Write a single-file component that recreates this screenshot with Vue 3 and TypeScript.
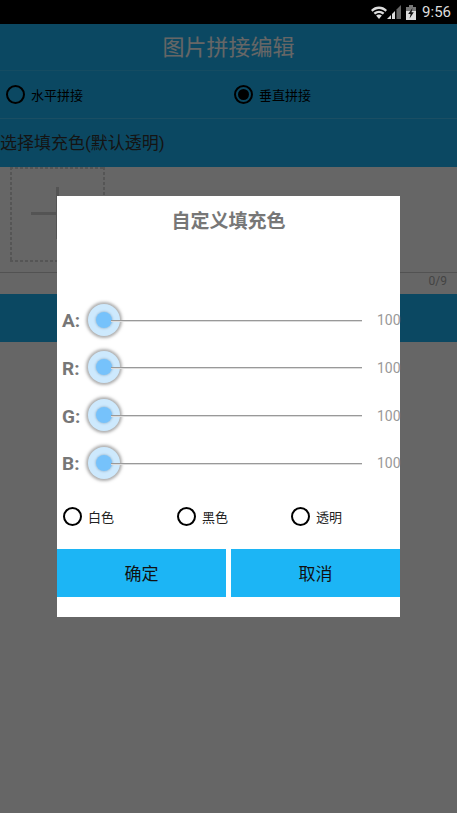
<script setup lang="ts">
const sliders = ['A', 'R', 'G', 'B'];
const fills = ['白色', '黑色', '透明'];
</script>

<template>
  <div class="screen">
    <div class="status">
      <svg class="wifi" viewBox="0 0 16 13" width="16" height="13">
        <path d="M0 4 C4.5 -0.6 11.5 -0.6 16 4 L14.5 5.8 C10.3 2.2 5.7 2.2 1.5 5.8Z" fill="#ddd" />
        <path d="M2.6 6.8 C5.8 3.9 10.2 3.9 13.4 6.8 L11.9 8.5 C9.5 6.4 6.5 6.4 4.1 8.5Z" fill="#ddd" />
        <path d="M5.1 9.5 C6.9 8 9.1 8 10.9 9.5 L8 13Z" fill="#ddd" />
      </svg>
      <svg class="signal" viewBox="0 0 14 14" width="14" height="14">
        <path d="M0 14 L4 10 V14Z" fill="#ddd" />
        <path d="M5 9 L8 6 V14 H5Z" fill="#ddd" />
        <path d="M9.5 4.5 L14 0 V14 H9.5Z" fill="#666" />
      </svg>
      <svg class="battery" viewBox="0 0 10 15" width="10" height="15">
        <path d="M3 0 H7 V2 H10 V15 H0 V2 H3Z" fill="#777" />
        <path d="M0 6 H10 V15 H0Z" fill="#ddd" />
        <path d="M6.5 3 L2.2 9 H4.6 L3.6 13.5 L7.8 7.2 H5.5Z" fill="#111" />
      </svg>
      <span class="time">9:56</span>
    </div>

    <div class="page">
      <header class="title">图片拼接编辑</header>
      <div class="mode-row">
        <label class="mode"><span class="radio"></span>水平拼接</label>
        <label class="mode"><span class="radio on"></span>垂直拼接</label>
      </div>
      <div class="fill-row">选择填充色(默认透明)</div>
      <div class="add-box"><span class="plus"></span></div>
      <div class="count">0/9</div>
      <div class="wide-btn"></div>

      <div class="scrim">
        <section class="dialog">
          <h2 class="dialog-title">自定义填充色</h2>
          <div class="sliders">
            <div v-for="s in sliders" :key="s" class="slider">
              <span class="letter">{{ s }}:</span>
              <div class="track">
                <span class="thumb"><span class="dot"></span></span>
              </div>
              <span class="value">100</span>
            </div>
          </div>
          <div class="fills">
            <label v-for="f in fills" :key="f" class="fill"><span class="radio small"></span>{{ f }}</label>
          </div>
          <div class="actions">
            <button class="action">确定</button>
            <button class="action">取消</button>
          </div>
        </section>
      </div>
    </div>
  </div>
</template>

<style scoped>
.screen {
  width: 457px;
  height: 813px;
  display: flex;
  flex-direction: column;
  overflow: hidden;
  font-family: "Roboto", "Noto Sans CJK SC", sans-serif;
  background: #000;
}
.status {
  height: 24px;
  flex: none;
  display: flex;
  align-items: center;
  justify-content: flex-end;
  padding-right: 6px;
  box-sizing: border-box;
}
.signal { margin-right: 5px; }
.battery { margin-right: 6px; }
.time {
  color: #ddd;
  font-size: 15px;
  line-height: 26px;
}
.page {
  position: relative;
  flex: 1;
  background: #fff;
  display: flex;
  flex-direction: column;
}
.title {
  height: 47px;
  box-sizing: border-box;
  background: #1cb5f5;
  border-bottom: 1px solid #35bdf6;
  color: #fff;
  font-size: 22px;
  line-height: 47px;
  text-align: center;
}
.mode-row {
  height: 48px;
  box-sizing: border-box;
  background: #1cb5f5;
  border-bottom: 1px solid #45c3f7;
  display: grid;
  grid-template-columns: 228px 1fr;
  padding-left: 6px;
}
.mode {
  display: flex;
  align-items: center;
  gap: 6px;
  font-size: 13px;
  color: #000;
}
.radio {
  width: 19px;
  height: 19px;
  box-sizing: border-box;
  border: 2px solid #000;
  border-radius: 50%;
  display: flex;
  align-items: center;
  justify-content: center;
  flex: none;
}
.radio.on::after {
  content: "";
  width: 11px;
  height: 11px;
  border-radius: 50%;
  background: #000;
}
.fill-row {
  height: 48px;
  background: #1cb5f5;
  color: #333;
  font-size: 17px;
  line-height: 49px;
  white-space: nowrap;
}
.add-box {
  width: 95px;
  height: 95px;
  margin-left: 10px;
  box-sizing: border-box;
  display: flex;
  align-items: center;
  justify-content: center;
  background:
    repeating-linear-gradient(90deg, #d4d4d4 0 3px, transparent 3px 5px) top / 100% 2px no-repeat,
    repeating-linear-gradient(90deg, #d4d4d4 0 3px, transparent 3px 5px) bottom / 100% 2px no-repeat,
    repeating-linear-gradient(180deg, #d4d4d4 0 3px, transparent 3px 5px) left / 2px 100% no-repeat,
    repeating-linear-gradient(180deg, #d4d4d4 0 3px, transparent 3px 5px) right / 2px 100% no-repeat;
}
.plus {
  width: 52px;
  height: 52px;
  margin: -3px 1px 0 0;
  background:
    linear-gradient(#d2d2d2, #d2d2d2) center / 52px 3px no-repeat,
    linear-gradient(#d2d2d2, #d2d2d2) center / 3px 52px no-repeat;
}
.count {
  margin-top: 10px;
  height: 22px;
  box-sizing: border-box;
  border-top: 1px solid #ccc;
  color: #aaa;
  font-size: 12px;
  line-height: 17px;
  text-align: right;
  padding-right: 10px;
}
.wide-btn {
  height: 48px;
  background: #1cb5f5;
}
.scrim {
  position: absolute;
  inset: 0;
  background: rgba(0, 0, 0, 0.6);
}
.dialog {
  position: absolute;
  left: 57px;
  top: 172px;
  width: 343px;
  height: 421px;
  background: #fff;
  display: flex;
  flex-direction: column;
}
.dialog-title {
  margin: 0;
  height: 100.5px;
  flex: none;
  color: #777;
  font-size: 19px;
  font-weight: 700;
  line-height: 51px;
  text-align: center;
}
.sliders {
  display: flex;
  flex-direction: column;
}
.slider {
  height: 47.67px;
  display: flex;
  align-items: center;
  padding-left: 5px;
}
.letter {
  width: 24px;
  flex: none;
  color: #777;
  font-size: 19px;
  font-weight: 700;
  line-height: 24px;
  padding-top: 2px;
}
.track {
  position: relative;
  width: 276px;
  height: 1px;
  flex: none;
}
.track::after {
  content: "";
  position: absolute;
  left: 25px;
  right: 0;
  top: 0;
  height: 1px;
  background: #999;
  box-shadow: 0 1px 0 #dcdcdc;
}
.thumb {
  position: absolute;
  left: 2px;
  top: -16px;
  width: 32px;
  height: 32px;
  border-radius: 50%;
  background: #cde9fd;
  box-shadow: 0 0 3px 2px rgba(130, 130, 130, 0.65);
  display: flex;
  align-items: center;
  justify-content: center;
}
.dot {
  width: 16px;
  height: 16px;
  border-radius: 50%;
  background: #76c2fb;
  box-shadow: 0 0 2px 1px #a9c6dc;
}
.value {
  margin-left: 15px;
  flex: none;
  color: #999;
  font-size: 14px;
  white-space: nowrap;
}
.fills {
  height: 61.8px;
  box-sizing: border-box;
  padding: 0 0 4px 6px;
  display: grid;
  grid-template-columns: 114px 114px 1fr;
}
.fill {
  display: flex;
  align-items: center;
  gap: 6px;
  font-size: 13px;
  color: #222;
}
.actions {
  display: grid;
  grid-template-columns: 1fr 1fr;
  gap: 5px;
  height: 48px;
}
.action {
  border: 0;
  padding: 0;
  background: #1cb5f5;
  color: #111;
  font-family: inherit;
  font-size: 17px;
}
</style>

<style>
html, body { margin: 0; padding: 0; background: #000; }
</style>
